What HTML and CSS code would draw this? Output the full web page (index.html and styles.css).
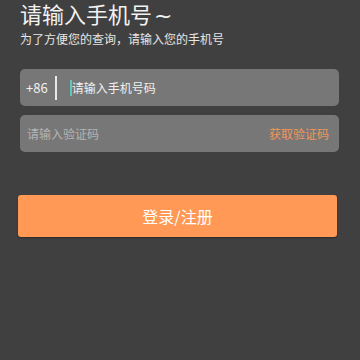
FILE: index.html
```html
<!DOCTYPE html>
<html lang="zh-CN">
<head>
<meta charset="utf-8">
<link rel="stylesheet" href="styles.css">
</head>
<body>
<main class="page">
  <h1 class="title">请输入手机号<span class="tilde">~</span></h1>
  <p class="subtitle">为了方便您的查询，请输入您的手机号</p>
  <div class="field phone">
    <span class="prefix">+86</span>
    <span class="divider"></span>
    <span class="cursor"></span>
    <span class="placeholder">请输入手机号码</span>
  </div>
  <div class="field code">
    <span class="placeholder dim">请输入验证码</span>
    <span class="getcode">获取验证码</span>
  </div>
  <button class="submit">登录/注册</button>
</main>
</body>
</html>
```
FILE: styles.css
```css
html, body {
  margin: 0;
  padding: 0;
  background: #404040;
  width: 360px;
  height: 360px;
  overflow: hidden;
}
.page {
  font-family: "Noto Sans CJK SC", "Noto Sans", sans-serif;
  padding: 0 21px 0 20px;
  display: flex;
  flex-direction: column;
}
.title {
  margin: 0;
  font-size: 22px;
  line-height: 26px;
  font-weight: 400;
  color: #f2f2f2;
}
.tilde {
  font-family: "DejaVu Sans", sans-serif;
  margin-left: 2px;
  line-height: 0;
}
.subtitle {
  margin: 5px 0 0 0;
  font-size: 12px;
  line-height: 16px;
  color: #e6e6e6;
}
.field {
  height: 37px;
  border-radius: 5px;
  background: #777777;
  display: flex;
  align-items: center;
  box-sizing: border-box;
}
.phone {
  margin-top: 22px;
  padding-left: 6px;
}
.code {
  margin-top: 9px;
  padding: 0 10px 0 7px;
  justify-content: space-between;
}
.prefix {
  font-size: 13px;
  color: #f0f0f0;
}
.divider {
  width: 2px;
  height: 24px;
  background: #e8e8e8;
  margin-left: 7px;
}
.cursor {
  width: 2px;
  height: 16px;
  background: #5fc6bd;
  margin-left: 13px;
}
.placeholder {
  font-size: 12px;
  color: #f0f0f0;
}
.placeholder.dim {
  color: #b4b4b4;
}
.getcode {
  font-size: 12px;
  color: #f2955a;
}
.submit {
  margin: 43px 2px 0 -2px;
  height: 42px;
  border: none;
  border-radius: 3px;
  background: #ff9955;
  color: #ffffff;
  font-family: "Noto Sans CJK SC", "Noto Sans", sans-serif;
  font-size: 16px;
  box-shadow: 0 1px 2px rgba(0,0,0,0.35);
}
```
